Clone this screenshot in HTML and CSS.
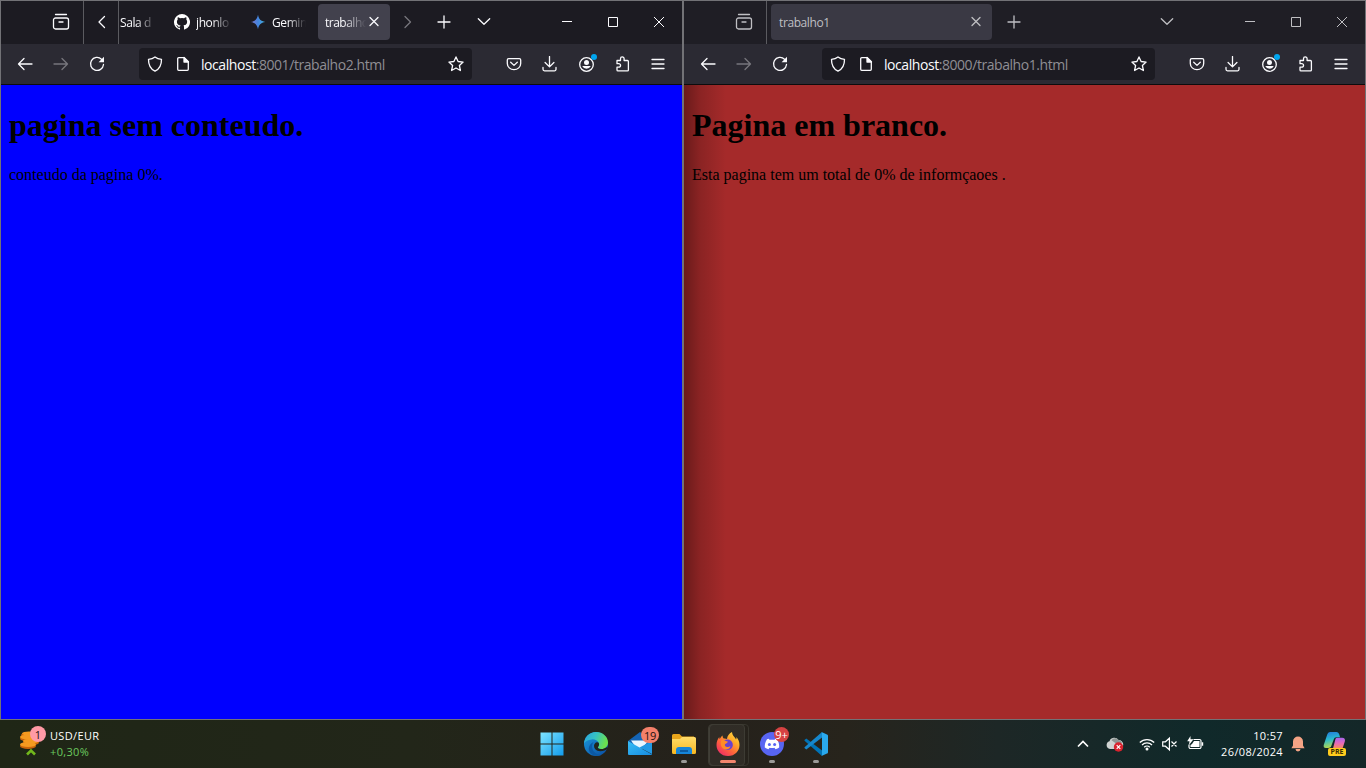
FILE: index.html
```html
<!DOCTYPE html>
<html lang="pt-BR">
<head>
<meta charset="utf-8">
<title>Desktop</title>
<link rel="stylesheet" href="styles.css">
</head>
<body>
<svg class="defs" aria-hidden="true">
  <defs>
    <symbol id="view" viewBox="0 0 18 18"><path d="M3.5 1.5h11M3.5 5h11a2 2 0 0 1 2 2v7a2 2 0 0 1-2 2h-11a2 2 0 0 1-2-2V7a2 2 0 0 1 2-2zM7 9h4"/></symbol>
    <symbol id="left" viewBox="0 0 16 16"><path d="M11.500 2.500L6 8l5.500 5.500"/></symbol>
    <symbol id="right" viewBox="0 0 16 16"><path d="M6 2.500L11.500 8L6 13.500"/></symbol>
    <symbol id="down" viewBox="0 0 16 16"><path d="M2.300 4.700L8 10.300l5.700-5.600"/></symbol>
    <symbol id="plus" viewBox="0 0 16 16"><path d="M8 2v12M2 8h12"/></symbol>
    <symbol id="x" viewBox="0 0 16 16"><path d="M4 3.500l8 8M12 3.500l-8 8"/></symbol>
    <symbol id="min" viewBox="0 0 16 16"><path d="M3 6.500h10"/></symbol>
    <symbol id="max" viewBox="0 0 16 16"><path d="M3.500 2.500h9v9h-9z"/></symbol>
    <symbol id="close" viewBox="0 0 16 16"><path d="M3 2l10 10M13 2L3 12"/></symbol>
    <symbol id="back" viewBox="0 0 16 16"><path d="M15 8H1.500M7 2.500L1.500 8L7 13.500"/></symbol>
    <symbol id="fwd" viewBox="0 0 16 16"><path d="M1 8h13.500M9 2.500L14.500 8L9 13.500"/></symbol>
    <symbol id="reload" viewBox="0 0 16 16"><path d="M12.500 3.200A6.500 6.500 0 1 0 14.500 8.500"/><path d="M15 .800v5.400H9.600z" fill="currentColor" stroke="none"/></symbol>
    <symbol id="shield" viewBox="0 0 16 16"><path d="M8 .900c2 1.600 4.300 2.200 6.500 2.400C14.600 9 12.300 13.200 8 15.200C3.700 13.200 1.400 9 1.500 3.300C3.700 3.100 6 2.500 8 .900z"/></symbol>
    <symbol id="doc" viewBox="0 0 16 16"><path d="M4.200 1.700h5l4.100 4.100v7.500a1 1 0 0 1-1 1H3.700a1 1 0 0 1-1-1V2.700a1 1 0 0 1 1-1z"/><path d="M9 1.500v4.500h4.500z" fill="currentColor"/></symbol>
    <symbol id="star" viewBox="0 0 16 16"><path d="M8 .900l2.100 4.600 5 .600-3.700 3.400 1 5-4.400-2.500-4.400 2.500 1-5L.900 6.100l5-.600z"/></symbol>
    <symbol id="pocket" viewBox="0 0 16 16"><path d="M2.700 2.700h10.600a1.400 1.400 0 0 1 1.400 1.400v3.400a6.700 6.200 0 0 1-13.400 0V4.100a1.400 1.400 0 0 1 1.400-1.400zM4.700 6.300L8 9.400l3.300-3.100"/></symbol>
    <symbol id="download" viewBox="0 0 16 16"><path d="M7.500 .500v10M3.100 6.500l4.400 4.400 4.400-4.400M1 11.500v1.800a1.500 1.500 0 0 0 1.500 1.500h10a1.500 1.500 0 0 0 1.500-1.500v-1.800"/></symbol>
    <symbol id="account" viewBox="0 0 16 16"><circle cx="8.500" cy="8.500" r="6.800"/><circle cx="8.500" cy="6.500" r="2.500" fill="currentColor" stroke="none"/><path d="M4.200 10h8.600a4.800 4.800 0 0 1-8.600 0z" fill="currentColor" stroke="none"/></symbol>
    <symbol id="ext" viewBox="0 0 16 16"><path d="M3 4.500h3.500V2.700a1.800 1.800 0 0 1 3.600 0v1.800h3.300a1 1 0 0 1 1 1v8.400a1 1 0 0 1-1 1H4a1 1 0 0 1-1-1v-2.700h1.800a1.700 1.700 0 0 0 0-3.500H3z"/></symbol>
    <symbol id="menu" viewBox="0 0 16 16"><path d="M2 3.500h12M2 8h12M2 12.500h12"/></symbol>
    <linearGradient id="gGem"><stop offset="0" stop-color="#8276c8"/><stop offset=".5" stop-color="#4384df"/><stop offset="1" stop-color="#43b4dc"/></linearGradient>
    <linearGradient id="gWin" x2="1" y2="1"><stop stop-color="#7ee4ff"/><stop offset="1" stop-color="#129cec"/></linearGradient>
    <linearGradient id="gEdge" x2="1" y2=".3"><stop stop-color="#2ba3df"/><stop offset=".5" stop-color="#35c1c5"/><stop offset="1" stop-color="#6be04e"/></linearGradient>
    <linearGradient id="gEdge2" x2="1" y2="1"><stop stop-color="#1b9ce0"/><stop offset="1" stop-color="#0a4ba0"/></linearGradient>
    <linearGradient id="gMail" x2="1" y2="1"><stop stop-color="#38bdf5"/><stop offset="1" stop-color="#168be0"/></linearGradient>
    <linearGradient id="gFold" x2="0" y2="1"><stop stop-color="#ffdc6a"/><stop offset="1" stop-color="#f8b820"/></linearGradient>
    <linearGradient id="gFox" x1="1" y1="0" x2=".2" y2="1"><stop stop-color="#ffe84b"/><stop offset=".35" stop-color="#ffad29"/><stop offset=".65" stop-color="#ff663a"/><stop offset="1" stop-color="#ed2a68"/></linearGradient>
    <linearGradient id="gCopA" x2=".2" y2="1"><stop stop-color="#2476dd"/><stop offset=".5" stop-color="#28b9cf"/><stop offset="1" stop-color="#b1d850"/></linearGradient>
    <linearGradient id="gCopB" x2="0" y2="1"><stop stop-color="#a765ed"/><stop offset=".5" stop-color="#e568bb"/><stop offset="1" stop-color="#fa8a60"/></linearGradient>
  </defs>
</svg>
<main class="desktop">
  <section class="window">
    <header class="tabbar">
      <span class="view"><svg class="icon i18"><use href="#view"/></svg></span>
      <span class="scroll bordered"><svg class="icon"><use href="#left"/></svg></span>
      <span class="tab first"><span class="label fade">Sala d</span></span>
      <span class="tab second"><svg class="fav" viewBox="0 0 16 16"><path fill="#fff" d="M8 0a8 8 0 0 0-2.530 15.590c.4.070.550-.170.550-.380v-1.490c-2.230.490-2.700-.950-2.700-.950-.360-.920-.890-1.170-.890-1.170-.730-.500.050-.490.050-.490.810.060 1.230.830 1.230.830.720 1.230 1.880.870 2.340.670.070-.520.280-.870.510-1.070-1.780-.200-3.640-.890-3.640-3.950 0-.870.310-1.590.820-2.150-.080-.200-.360-1.010.080-2.110 0 0 .670-.220 2.200.820a7.600 7.600 0 0 1 4 0c1.530-1.040 2.200-.820 2.200-.820.440 1.100.160 1.910.080 2.110.510.560.820 1.280.820 2.150 0 3.070-1.870 3.750-3.650 3.950.290.250.540.730.540 1.480v2.190c0 .210.150.460.550.380A8 8 0 0 0 8 0z"/></svg><span class="label fade">jhonlo</span></span>
      <span class="tab third"><svg class="fav" viewBox="0 0 16 16"><path fill="url(#gGem)" d="M8 .800C8.700 5 10.800 7.300 15.200 8C10.800 8.700 8.700 11 8 15.200C7.300 11 5.200 8.700.800 8C5.200 7.300 7.300 5 8 .800z"/></svg><span class="label fade">Gemin</span></span>
      <span class="tab active small"><span class="label fade">trabalho</span><svg class="icon"><use href="#x"/></svg></span>
      <span class="scroll dim"><svg class="icon"><use href="#right"/></svg></span>
      <span class="newtab"><svg class="icon"><use href="#plus"/></svg></span>
      <span class="list"><svg class="icon"><use href="#down"/></svg></span>
      <span class="controls"><svg class="icon thin"><use href="#min"/></svg><svg class="icon thin"><use href="#max"/></svg><svg class="icon thin"><use href="#close"/></svg></span>
    </header>
    <nav class="navbar">
      <span class="btn"><svg class="icon"><use href="#back"/></svg></span>
      <span class="btn dim"><svg class="icon"><use href="#fwd"/></svg></span>
      <span class="btn"><svg class="icon"><use href="#reload"/></svg></span>
      <div class="url"><svg class="icon"><use href="#shield"/></svg><svg class="icon page-icon"><use href="#doc"/></svg><span class="address"><b>localhost</b>:8001/trabalho2.html</span><svg class="icon star"><use href="#star"/></svg></div>
      <span class="btn"><svg class="icon"><use href="#pocket"/></svg></span>
      <span class="btn"><svg class="icon"><use href="#download"/></svg></span>
      <span class="btn"><svg class="icon"><use href="#account"/></svg><i class="dot"></i></span>
      <span class="btn"><svg class="icon"><use href="#ext"/></svg></span>
      <span class="btn"><svg class="icon"><use href="#menu"/></svg></span>
    </nav>
    <article class="page blue"><h1>pagina sem conteudo.</h1><p>conteudo da pagina 0%.</p></article>
  </section>
  <section class="window inactive">
    <header class="tabbar">
      <span class="view"><svg class="icon i18"><use href="#view"/></svg></span>
      <span class="tab active wide"><span class="label">trabalho1</span><svg class="icon"><use href="#x"/></svg></span>
      <span class="newtab"><svg class="icon"><use href="#plus"/></svg></span>
      <span class="list"><svg class="icon"><use href="#down"/></svg></span>
      <span class="controls"><svg class="icon thin"><use href="#min"/></svg><svg class="icon thin"><use href="#max"/></svg><svg class="icon thin"><use href="#close"/></svg></span>
    </header>
    <nav class="navbar">
      <span class="btn"><svg class="icon"><use href="#back"/></svg></span>
      <span class="btn dim"><svg class="icon"><use href="#fwd"/></svg></span>
      <span class="btn"><svg class="icon"><use href="#reload"/></svg></span>
      <div class="url"><svg class="icon"><use href="#shield"/></svg><svg class="icon page-icon"><use href="#doc"/></svg><span class="address"><b>localhost</b>:8000/trabalho1.html</span><svg class="icon star"><use href="#star"/></svg></div>
      <span class="btn"><svg class="icon"><use href="#pocket"/></svg></span>
      <span class="btn"><svg class="icon"><use href="#download"/></svg></span>
      <span class="btn"><svg class="icon"><use href="#account"/></svg><i class="dot"></i></span>
      <span class="btn"><svg class="icon"><use href="#ext"/></svg></span>
      <span class="btn"><svg class="icon"><use href="#menu"/></svg></span>
    </nav>
    <article class="page brown"><h1>Pagina em branco.</h1><p>Esta pagina tem um total de 0% de informçaoes .</p></article>
  </section>
</main>
<footer class="taskbar">
  <div class="widget">
    <span class="coins"><svg width="22" height="28" viewBox="0 0 22 28"><g fill="#c9640a"><ellipse cx="9" cy="17" rx="8" ry="3"/><ellipse cx="12" cy="13.500" rx="8" ry="3"/><ellipse cx="9" cy="9.500" rx="8" ry="3"/><ellipse cx="10" cy="6" rx="8" ry="3"/></g><g fill="#f59a20"><ellipse cx="9" cy="15.500" rx="8" ry="2.400"/><ellipse cx="12" cy="12" rx="8" ry="2.300"/><ellipse cx="9" cy="8" rx="8" ry="2.300"/><ellipse cx="10" cy="4.500" rx="7" ry="2"/></g><path d="M8 25.500l4-4 4 4" fill="none" stroke="#72b81c" stroke-width="2.600"/></svg><i class="badge pink">1</i></span>
    <span class="rates"><span>USD/EUR</span><span class="up">+0,30%</span></span>
  </div>
  <div class="apps">
    <span class="app"><svg viewBox="0 0 24 24"><path fill="url(#gWin)" d="M.500.500h11v11H.500zM12.500.500h11v11h-11zM.500 12.500h11v11H.500zM12.500 12.500h11v11h-11z"/></svg></span>
    <span class="app"><svg viewBox="0 0 24 24"><circle cx="12" cy="12" r="12" fill="url(#gEdge2)"/><path fill="url(#gEdge)" d="M0 11.500C.500 5 5.500 0 12 0c7 0 12 5 12 10.500 0 4-3 6.500-6.500 6.500-2.500 0-4-1-3.500-2 1.500-1.500 1.300-3 .800-4C13.500 8.300 10.500 7 7.500 7.400C4 7.700 1.200 9.300 0 11.500z"/><path fill="#0c59a4" d="M8.500 12C7 17 10 22.500 17 22.900C11 25.500 4.500 22 4.800 16.500c.200-3 1.700-5 4.700-6.500z"/><path fill="#22241a" d="M14.800 11c.500 1.500.200 2.800-.800 4-.500.600.300 2 3.500 2 2 0 3.600-.600 4.700-1.500 1-.4 2 .1 1.500 1.200-3 2.700-10 3.500-12.400.6-2.200-2.600-1.400-6 1.400-7 1-.3 1.700.1 2.100.7z"/></svg></span>
    <span class="app"><svg viewBox="0 0 24 24"><path fill="#1464b4" d="M0 9L12 0l12 9v4H0z"/><path fill="#e9f6ff" d="M3 8.500h18L13 17H9z"/><path fill="url(#gMail)" d="M0 9l24 13.500a1 1 0 0 1-1 .5H1a1 1 0 0 1-1-1z"/><path fill="#2199e4" d="M24 9v13L11.500 15.500z"/></svg><i class="badge salmon">19</i></span>
    <span class="app"><svg viewBox="0 0 24 24"><path fill="#e9a51b" d="M0 3.500a1.500 1.500 0 0 1 1.500-1.500h6L10 4.500h12v5H0z"/><path fill="url(#gFold)" d="M0 7h8l2-2h12.500A1.500 1.500 0 0 1 24 6.500v14a1.500 1.500 0 0 1-1.500 1.500h-21A1.500 1.500 0 0 1 0 20.500z"/><path fill="#1685d8" d="M4 22v-4a3 3 0 0 1 3-3h10a3 3 0 0 1 3 3v4z"/><path fill="#0c5ba0" d="M8 18h8v2H8z"/></svg><i class="run"></i></span>
    <span class="app current"><svg viewBox="0 0 24 24"><path fill="url(#gFox)" d="M12 24C5 24 .500 19 .500 13c0-3 1-6 2.800-8 0 1 .1 1.500.5 2C4.500 5.700 5.200 4.500 6.500 3.500c0 1.200.4 2.200 1.200 3C9 6.300 10 6.500 11 7c.3-3 2-5.500 5-7 .3 4 3 5 4 7.500.5-.6.500-1.500.3-2.500 2.200 2.300 3.200 5 3.200 8C23.500 19 19 24 12 24z"/><path fill="#6841cf" d="M8 8.500c1.800-1.300 5-1.500 7 .3 3.800 3.600 1.200 9.400-3.700 9.200-4.300-.2-5.800-3.800-4.800-6.500z"/><path fill="#ff8b26" d="M5.500 8l3 .200c1.100.500 2 1.300 3.500 1.300-.5 1.500-2.200 2-3 2.700-.8.900.5 3 2.500 2.800 1.500-.1 2-.8 3-.5-1 2.500-3.700 3.700-6.300 2.700C4.500 15.500 4 11 5.500 8z"/></svg><i class="run wide-run"></i></span>
    <span class="app"><svg viewBox="0 0 24 24"><circle cx="12" cy="12" r="12" fill="#5865f2"/><path fill="#fff" d="M8.700 6.700L7 7.200C5.300 9.600 4.600 12.500 4.800 15.500c1.100.9 2.400 1.400 3.700 1.700l1-1.500c1.700.5 3.300.5 5 0l1 1.500c1.300-.3 2.600-.8 3.700-1.700.2-3-.5-5.900-2.200-8.300l-1.700-.5-.7 1.100H9.400z"/><circle cx="9.400" cy="12.500" r="1.500" fill="#5865f2"/><circle cx="14.600" cy="12.500" r="1.500" fill="#5865f2"/></svg><i class="badge red">9+</i><i class="run"></i></span>
    <span class="app"><svg viewBox="0 0 24 24"><path fill="#0073b7" d="M.500 8L2.300 6.500 18 18.500V24L.500 8.800z"/><path fill="#1687cc" d="M.500 16l1.800 1.500L18 5.500V0L.500 15.200z"/><path fill="#2aa9ee" d="M17.500 0L23 2.400a1.500 1.500 0 0 1 1 1.400v16.400a1.500 1.500 0 0 1-1 1.400L17.500 24c.3-.3.500-.5.500-1V1c0-.5-.2-.7-.5-1z"/></svg><i class="run"></i></span>
  </div>
  <div class="tray">
    <svg class="tr-up" viewBox="0 0 16 16"><path d="M3 10.500L8 5.500l5 5" fill="none" stroke="#fff" stroke-width="1.700"/></svg>
    <svg class="tr-cloud" viewBox="0 0 18 16"><path fill="#cfd2d1" d="M4 13a4 4 0 0 1-.5-7.800A5 5 0 0 1 12.500 4 4.500 4.500 0 0 1 13 13z"/><path fill="#8f9694" d="M5.500 4.200C7 1.500 11 1.500 12.500 4c1.300 0 3 1.200 3.500 3L12 9z"/><circle cx="12.500" cy="11" r="4.700" fill="#d9222d"/><path d="M10.700 9.200l3.600 3.600m0-3.600l-3.600 3.600" stroke="#fff" stroke-width="1.200"/></svg>
    <svg class="tr-wifi" viewBox="0 0 16 16"><g fill="none" stroke="#fff" stroke-width="1.250"><path d="M.800 6.500a10.200 10.200 0 0 1 14.400 0M3 9a7 7 0 0 1 10 0M5.200 11.300a4 4 0 0 1 5.600 0"/></g><circle cx="8" cy="13" r="1.500" fill="#fff"/></svg>
    <svg class="tr-mute" viewBox="0 0 16 16"><path d="M.700 5.800h2.700l4-3.600v11.600l-4-3.600H.700zM9.500 5.500l5 5m0-5l-5 5" fill="none" stroke="#fff" stroke-width="1.200"/></svg>
    <svg class="tr-bat" viewBox="0 0 17 16"><path d="M6.500 3.500h6A1.500 1.500 0 0 1 14 5v6a1.500 1.500 0 0 1-1.500 1.500h-9A1.500 1.500 0 0 1 2 11V8.500" fill="none" stroke="#fff" stroke-width="1.200"/><path fill="#fff" d="M7 5h5.500v6h-9V9L5 8zM14.700 6.300h1.500v3.400h-1.500zM3.500 0v3.300h3L2 9l.5-3.800H.200z"/></svg>
    <span class="clock"><span>10:57</span><span>26/08/2024</span></span>
    <svg class="tr-bell" viewBox="0 0 14 16"><path fill="#f5a485" d="M7 .500a5 5 0 0 1 5 5v4l1.600 2.700H.400L2 9.500v-4a5 5 0 0 1 5-5zM4.500 13h5a2.500 2.500 0 0 1-5 0z"/></svg>
    <span class="copilot"><svg viewBox="0 0 24 22"><path fill="url(#gCopA)" d="M7.500 0H14c1.500 0 2.500 1 3 2.500l.8 3H14c-1.500 0-2.200.7-2.700 2.200L8.500 15c-.4 1.200-1.500 1.800-3 1.800H3c-2 0-2.800-1.500-2.200-3.500L4.300 3C4.800 1.200 6 0 7.500 0z"/><path fill="url(#gCopB)" d="M14.500 6H20c2.500 0 3.500 1.700 2.800 4L20.500 17H10.500l2.300-9c.3-1.200.8-2 1.700-2z"/></svg><i>PRE</i></span>
  </div>
</footer>
</body>
</html>
```
FILE: styles.css
```css
* { box-sizing: border-box; }
body { margin: 0; width: 1366px; height: 768px; overflow: hidden; display: flex; flex-direction: column; background: #111; font-family: "Open Sans", "Noto Sans", sans-serif; }
.defs { position: absolute; width: 0; height: 0; }
svg { display: block; flex: none; }
i { font-style: normal; }
.desktop { display: flex; height: 720px; }
.window { width: 683px; height: 720px; border: 1px solid #727276; display: flex; flex-direction: column; color: #fbfbfe; }
.icon { width: 16px; height: 16px; fill: none; stroke: currentColor; stroke-width: 1.3; stroke-linejoin: round; stroke-linecap: round; color: inherit; }
.i18 { width: 18px; height: 18px; }
.thin { stroke-width: 1; stroke-linecap: butt; stroke-linejoin: miter; }
.tabbar { height: 43px; background: #1c1b22; display: flex; align-items: center; font-size: 12px; }
.inactive .tabbar { background: #1f1e25; color: #bfbfc3; }
.view { width: 83px; height: 43px; padding-left: 51px; border-right: 1px solid #5b5b60; display: flex; align-items: center; flex: none; }
.view svg { margin-top: -2px; }
.scroll { width: 34px; height: 43px; display: flex; align-items: center; justify-content: center; flex: none; }
.bordered { width: 35px; border-right: 1px solid #5b5b60; }
.scroll svg, .newtab svg, .list svg { margin-top: -1px; }
.dim { color: #77767d; }
.tab { display: flex; align-items: center; height: 36px; flex: none; white-space: nowrap; }
.label { letter-spacing: -.4px; }
.fade { -webkit-mask-image: linear-gradient(90deg, #000 45%, transparent); mask-image: linear-gradient(90deg, #000 45%, transparent); }
.fav { width: 16px; height: 16px; margin: -1px 6px 0 0; }
.first { width: 55px; padding-left: 1px; }
.first .label { width: 36px; }
.second { width: 76px; }
.second .label { width: 36px; }
.third { width: 68px; }
.third .label { width: 34px; }
.active { background: #42414d; border-radius: 4px; margin-top: -1px; }
.small { width: 72px; padding-left: 7px; }
.small .label { width: 41px; flex: none; }
.small .label { letter-spacing: -.5px; }
.inactive .active { background: #3a3944; }
.wide { width: 221px; margin-left: 4px; padding: 0 8px; justify-content: space-between; }
.newtab { width: 39px; display: flex; justify-content: center; flex: none; }
.list { width: 41px; display: flex; justify-content: center; flex: none; }
.wide + .newtab { width: 44px; }
.wide + .newtab + .list { margin-left: 110px; }
.controls { margin-left: auto; display: flex; padding-right: 15px; gap: 30px; }
.navbar { height: 41px; background: #2b2a33; border-bottom: 1px solid #0c0c0d; display: flex; align-items: center; padding-left: 6px; }
.btn { width: 36px; height: 32px; display: flex; align-items: center; justify-content: center; position: relative; flex: none; }
.url { width: 333px; height: 32px; margin: 0 24px; background: #1c1b22; border-radius: 4px; display: flex; align-items: center; padding: 0 8px; }
.page-icon { margin: 0 10px 0 12px; }
.address { font-size: 14px; color: #8f8e94; letter-spacing: -.44px; white-space: nowrap; padding-top: 1px; }
.address b { font-weight: 400; color: #fbfbfe; }
.star { margin-left: auto; }
.dot { position: absolute; width: 6px; height: 6px; border-radius: 50%; background: #00a5ef; right: 7px; top: 6px; }
.page { flex: 1; padding: 0 8px; color: #000; font-family: "Liberation Serif", serif; font-size: 16px; }
.page h1 { font-size: 32px; line-height: 37px; margin: 22px 0 22px; }
.page p { margin: 0; line-height: 18px; }
.blue { background: #00f; }
.brown { background: linear-gradient(90deg, rgba(0,0,0,.36), rgba(0,0,0,.16) 16px, transparent 42px), #a52a2a; }
.taskbar { height: 48px; display: flex; background: linear-gradient(90deg, #1f2616 0, #222619 30%, #25211b 52%, #27241c 62%, #1d2726 73%, #10292a 88%, #142728 100%); color: #fff; font-size: 11px; }
.widget { width: 530px; display: flex; padding: 4px 0 0 19px; }
.coins { position: relative; width: 31px; padding-top: 5px; }
.badge { position: absolute; display: flex; align-items: center; justify-content: center; border-radius: 9px; height: 16px; font-size: 11px; color: #211; }
.pink { width: 16px; right: 4px; top: 2px; background: #ff9aa5; }
.rates { display: flex; flex-direction: column; line-height: 16px; padding-top: 4px; letter-spacing: .35px; }
.up { color: #6ccb5f; }
.apps { display: flex; }
.app { width: 44px; height: 48px; position: relative; display: flex; align-items: center; justify-content: center; flex: none; }
.app svg { width: 24px; height: 24px; }
.app .badge { right: 3px; top: 7px; }
.salmon { width: 18px; background: #f4806a; letter-spacing: -.3px; }
.app .red { width: 15px; height: 15px; background: #d64242; color: #fff; right: 5px; }
.run { position: absolute; width: 6px; height: 3px; border-radius: 2px; background: #9b9a98; bottom: 5px; left: 19px; }
.wide-run { width: 16px; left: 14px; background: #f4866e; }
.current::before { content: ""; position: absolute; left: 3px; top: 4px; width: 38px; height: 40px; border: 1px solid #37352d; border-radius: 4px; }
.current::after { content: ""; position: absolute; left: 2px; top: 4px; width: 35px; height: 40px; background: rgba(255,255,255,.05); border: 1px solid #3d3b33; border-radius: 4px; }
.current svg, .current .run { z-index: 1; }
.tray { margin-left: auto; display: flex; align-items: center; padding-right: 20px; }
.tray svg { height: 16px; }
.tr-up { width: 16px; margin-right: 15px; }
.tr-cloud { width: 18px; margin-right: 15px; }
.tr-wifi { width: 16px; margin-right: 7px; }
.tr-mute { width: 16px; margin-right: 9px; }
.tr-bat { width: 17px; }
.clock { width: 79px; display: flex; flex-direction: column; text-align: right; line-height: 16px; letter-spacing: .35px; }
.tr-bell { width: 14px; margin: 0 18px 0 8px; }
.tray .copilot { position: relative; width: 23px; height: 24px; }
.tray .copilot svg { width: 23px; height: 21px; }
.copilot i { position: absolute; right: 0; bottom: 0; width: 18px; height: 8px; border-radius: 2px; background: #ffcc1d; color: #3b2c00; font: 700 7px/8px "Open Sans", sans-serif; text-align: center; }
```
